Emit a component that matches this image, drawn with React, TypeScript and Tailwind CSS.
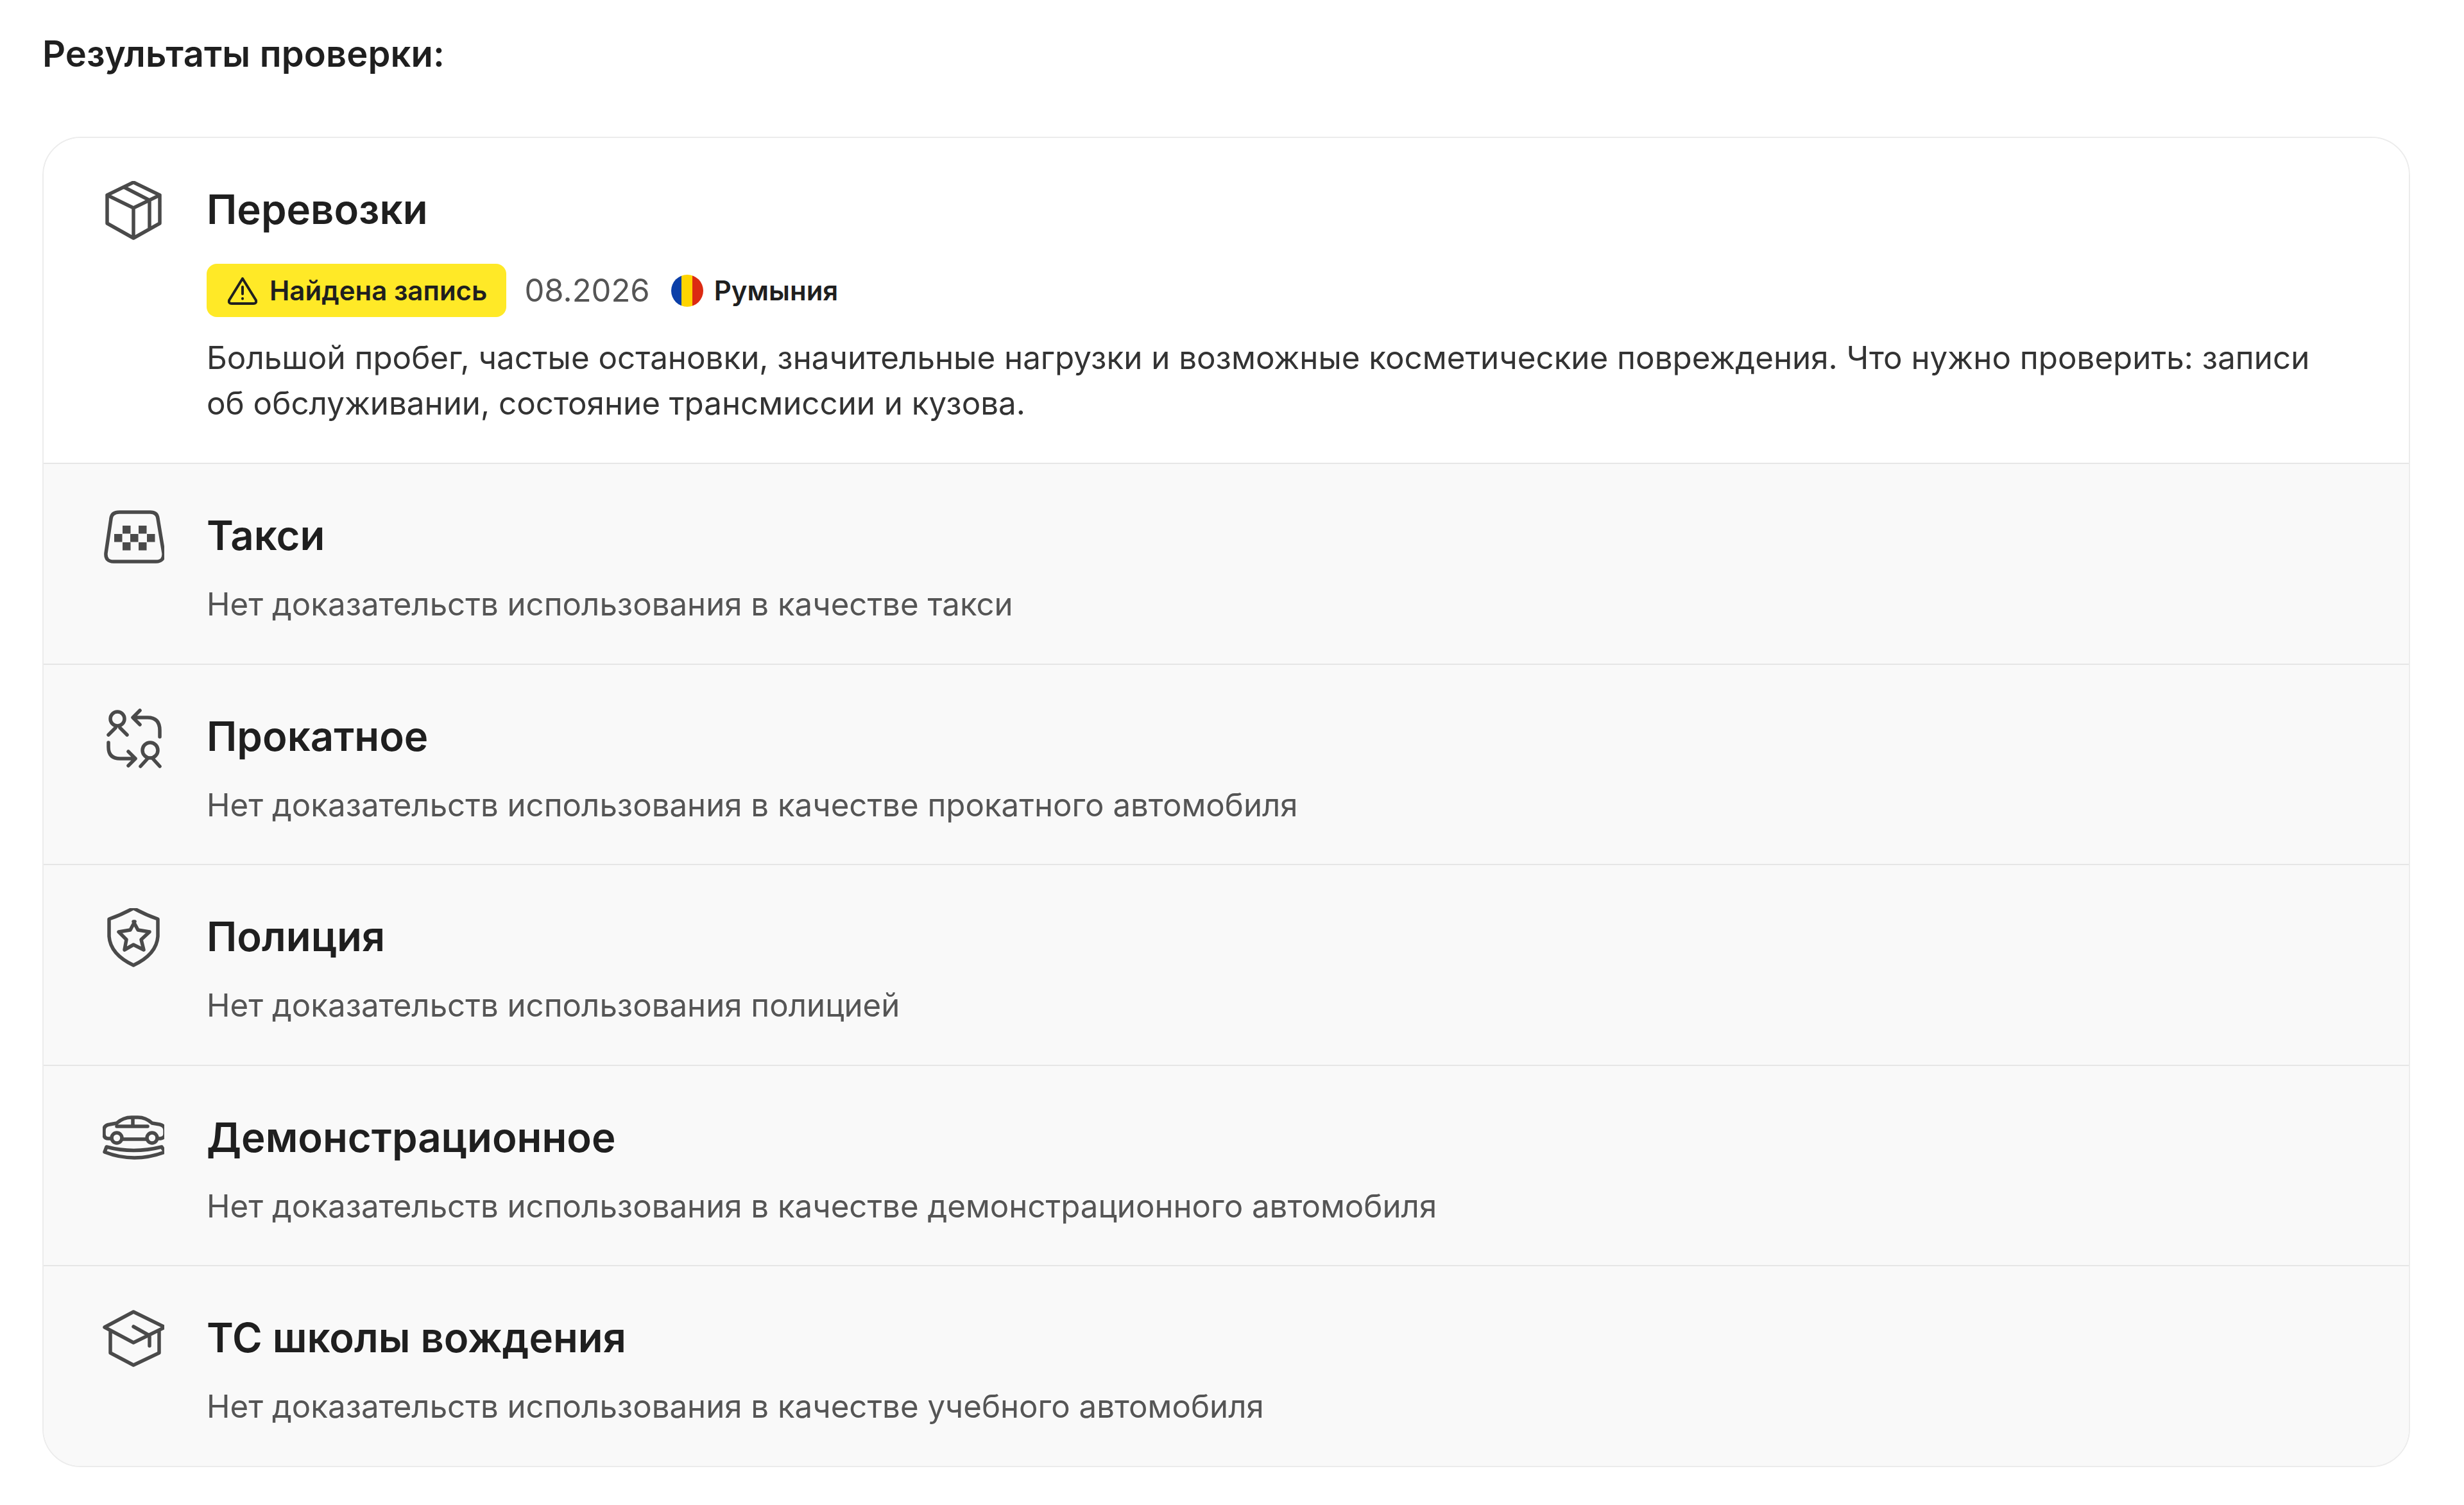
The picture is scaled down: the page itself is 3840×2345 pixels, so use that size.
import type { ReactNode } from "react"

const stroke = {
  fill: "none",
  stroke: "currentColor",
  strokeWidth: 5.5,
  strokeLinecap: "round" as const,
  strokeLinejoin: "round" as const,
}

function Icon({ y, children }: { y: number; children: ReactNode }) {
  return (
    <svg viewBox={`30 ${y} 96 96`} className="h-[96px] w-[96px] shrink-0 text-[#4a4a4a]" {...stroke}>
      {children}
    </svg>
  )
}

const BoxIcon = () => (
  <Icon y={21}>
    <path d="M37 43 78 23l41 20-41 20-41-20ZM37 43v44l41 23 41-23V43M78 63v47M64 31l39 20v45" />
  </Icon>
)

const TaxiIcon = () => (
  <Icon y={8}>
    <path d="M56 16h48q11 0 12 10l9 54q1 13-12 13H47q-13 0-12-13l8-54q1-10 13-10Z" />
    <g fill="currentColor" stroke="none">
      <rect x="61" y="37" width="12.5" height="12.5" />
      <rect x="86" y="37" width="12.5" height="12.5" />
      <rect x="48" y="50" width="12.5" height="12.5" />
      <rect x="73" y="50" width="12.5" height="12.5" />
      <rect x="99" y="50" width="12.5" height="12.5" />
      <rect x="61" y="63" width="12.5" height="12.5" />
      <rect x="86" y="63" width="12.5" height="12.5" />
    </g>
  </Icon>
)

const RentalIcon = () => (
  <Icon y={11}>
    <circle cx="53" cy="28" r="11" />
    <path d="M39 53l11-11M68 53 57 42" />
    <circle cx="104" cy="77" r="12" />
    <path d="M89 102l11-12M119 102l-11-12" />
    <path d="M119 56V46q0-20-19-20H78M88 15 77 26l11 11" />
    <path d="M39 65v7q0 18 18 18h24M70 79l11 11-11 11" />
  </Icon>
)

const PoliceIcon = () => (
  <Icon y={6}>
    <path d="M78 6q-18 10-38 17v27q2 28 38 45 36-17 38-45V23Q96 16 78 6Z" />
    <path d="m78 27 7 13 18 3-13 12 4 16-16-8-14 8 3-16-12-12 18-3 7-13Z" />
  </Icon>
)

const DemoIcon = () => (
  <Icon y={6}>
    <path d="M44 52h-5q-7 0-7-7v-6q0-8 9-9l11-2q10-9 23-9h10q12 0 22 9l12 2q8 2 8 9v6q0 6-7 7h-5M60 53h39M52 33h48M77 20v13" />
    <circle cx="52" cy="51" r="8" />
    <circle cx="107" cy="51" r="8" />
    <path d="M36 65q42 11 86 0l5 8q-48 18-94 0l3-8Z" />
  </Icon>
)

const SchoolIcon = () => (
  <Icon y={9}>
    <path d="M78 13 127 37 78 61 33 37 78 13ZM42 42v35l36 19 40-19V42M78 36l25 14v16" />
  </Icon>
)

const rows = [
  { title: "Такси", text: "Нет доказательств использования в качестве такси", icon: <TaxiIcon /> },
  { title: "Прокатное", text: "Нет доказательств использования в качестве прокатного автомобиля", icon: <RentalIcon /> },
  { title: "Полиция", text: "Нет доказательств использования полицией", icon: <PoliceIcon /> },
  { title: "Демонстрационное", text: "Нет доказательств использования в качестве демонстрационного автомобиля", icon: <DemoIcon /> },
  { title: "ТС школы вождения", text: "Нет доказательств использования в качестве учебного автомобиля", icon: <SchoolIcon /> },
]

export default function App() {
  return (
    <div className="min-h-[2345px] bg-white pl-[66px] pr-[84px] pt-[50px] font-['Inter',sans-serif] text-[#1f1f1f]">
      <h2 className="text-[56px] font-semibold leading-[68px] tracking-[0.15px]">Результаты проверки:</h2>

      <div className="mt-[95px] overflow-hidden rounded-[60px] border-2 border-[#ececec]">
        <div className="flex gap-[66px] bg-white pb-[57px] pl-[92px] pr-[100px] pt-[67px]">
          <BoxIcon />
          <div className="min-w-0 flex-1">
            <div className="pt-[4px] text-[63.5px] font-semibold leading-[80px]">Перевозки</div>
            <div className="mt-[45px] flex items-center">
              <span className="flex h-[83px] items-center gap-[18px] rounded-[16px] bg-[#ffe927] pl-[32px] pr-[30px] text-[42px] font-semibold">
                <svg viewBox="0 0 48 44" className="h-[44px] w-[48px]" fill="none" stroke="currentColor" strokeWidth="4" strokeLinejoin="round" strokeLinecap="round">
                  <path d="M24 3 3 37q-1 5 4 5h34q5 0 4-5L24 3Z" />
                  <path d="M24 16v11M24 34v.5" />
                </svg>
                Найдена запись
              </span>
              <span className="ml-[28px] text-[49px] text-[#555555]">08.2026</span>
              <span className="ml-[33px] flex h-[50px] w-[50px] overflow-hidden rounded-full">
                <span className="flex-1 bg-[#0b3fa8]" />
                <span className="flex-1 bg-[#ffd400]" />
                <span className="flex-1 bg-[#dc2a12]" />
              </span>
              <span className="ml-[17px] text-[42px] font-semibold">Румыния</span>
            </div>
            <p className="mt-[28px] text-[49.3px] leading-[71px] text-[#333333]">
              Большой пробег, частые остановки, значительные нагрузки и возможные косметические повреждения. Что нужно проверить: записи об обслуживании, состояние трансмиссии и кузова.
            </p>
          </div>
        </div>

        {rows.map((row) => (
          <div key={row.title} className="flex h-[312.5px] gap-[66px] border-t-2 border-[#e6e6e6] bg-[#f9f9f9] pl-[92px] pt-[67px]">
            {row.icon}
            <div>
              <div className="pt-[4px] text-[63.5px] font-semibold leading-[80px]">{row.title}</div>
              <div className="mt-[37px] text-[49.2px] leading-[60px] text-[#555555]">{row.text}</div>
            </div>
          </div>
        ))}
      </div>
    </div>
  )
}
